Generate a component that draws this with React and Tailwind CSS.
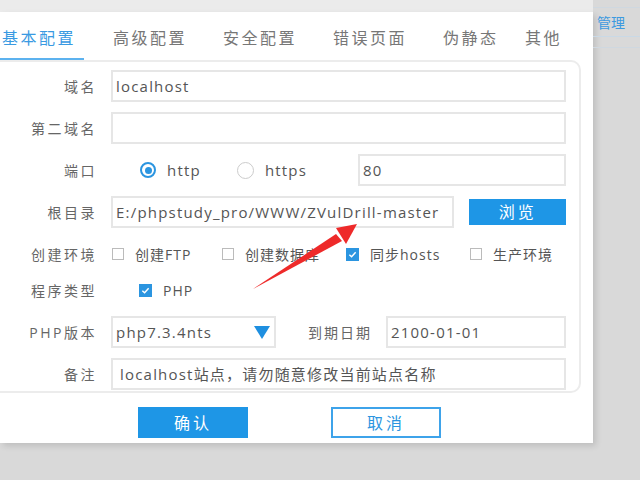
const font = { fontFamily: '"Open Sans", "Noto Sans CJK SC", sans-serif' };

const Label = ({ children }) => (
  <div className="w-[115px] shrink-0 text-right text-[14px] tracking-[2.5px] text-[#666]">{children}</div>
);

const Box = ({ checked }) =>
  checked ? (
    <span className="w-[13px] h-[13px] bg-[#2b95e0] flex items-center justify-center">
      <svg width="9" height="9" viewBox="0 0 10 10">
        <path d="M1.5 5.2 L4 7.5 L8.5 2.5" stroke="white" strokeWidth="1.6" fill="none" />
      </svg>
    </span>
  ) : (
    <span className="w-[12px] h-[12px] border border-[#bbb] bg-white" />
  );

const Field = ({ className, children }) => (
  <div className={"h-[32px] border-2 border-[#e6e6e6] flex items-center pl-[3px] text-[15px] tracking-[1.2px] text-[#555] " + className}>
    {children}
  </div>
);

export default function App() {
  return (
    <div className="w-[640px] h-[480px] bg-[#d9d9d9] relative overflow-hidden" style={font}>
      {/* background table on the right */}
      <div className="absolute left-[593px] top-0 w-[47px] h-[60px]">
        <div className="h-[8px] border-b border-[#cfd8e0]" />
        <div className="h-[29px] border-b border-[#c9d9e6] pl-[4px] pt-[4px] text-[14px] text-[#3d9ae0]">管理</div>
        <div className="h-[11px] border-b border-[#cfd8e0]" />
      </div>
      <div className="h-[12px] w-[593px] bg-[#ebebeb]" />
      <div className="w-[593px] h-[431px] bg-white shadow-[3px_3px_6px_rgba(0,0,0,0.12)] flex flex-col">
        {/* tabs */}
        <div className="h-[48px] flex items-start pt-[14px] text-[16px] tracking-[2.5px] text-[#777]">
          <div className="w-[84px] h-[34px] border-b-2 border-[#5cb2ef] text-[#3a9ae2] pl-[2px]">基本配置</div>
          <div className="ml-[29px] w-[110px]">高级配置</div>
          <div className="w-[110px]">安全配置</div>
          <div className="w-[110px]">错误页面</div>
          <div className="w-[82px]">伪静态</div>
          <div>其他</div>
        </div>
        {/* panel */}
        <div className="ml-[-20px] w-[601px] h-[333px] border-2 border-[#ececec] rounded-[10px] pr-[13px] flex flex-col pt-[8px]">
          <div className="flex items-center gap-[14px]">
            <Label>域名</Label>
            <Field className="flex-1">localhost</Field>
          </div>
          <div className="flex items-center gap-[14px] mt-[10px]">
            <Label>第二域名</Label>
            <Field className="flex-1" />
          </div>
          <div className="flex items-center mt-[10px]">
            <Label>端口</Label>
            <div className="ml-[43px] w-[16px] h-[16px] rounded-full border-2 border-[#2b95e0] flex items-center justify-center">
              <span className="w-[7px] h-[7px] rounded-full bg-[#2b95e0]" />
            </div>
            <span className="ml-[11px] text-[15px] tracking-[1.2px] text-[#555]">http</span>
            <div className="ml-[36px] w-[17px] h-[17px] rounded-full border border-[#ccc]" />
            <span className="ml-[11px] text-[15px] tracking-[1.2px] text-[#555]">https</span>
            <Field className="ml-auto w-[208px]">80</Field>
          </div>
          <div className="flex items-center gap-[14px] mt-[10px]">
            <Label>根目录</Label>
            <Field className="w-[345px]">E:/phpstudy_pro/WWW/ZVulDrill-master</Field>
            <div className="ml-[1px] w-[97px] h-[26px] bg-[#1e96e6] text-white text-[16px] tracking-[3px] flex items-center justify-center">浏览</div>
          </div>
          <div className="flex items-center h-[40px] mt-[6px] text-[14px] text-[#555] tracking-[1px]">
            <Label>创建环境</Label>
            <div className="ml-[15px] flex items-center gap-[11px] w-[110px]"><Box />创建FTP</div>
            <div className="flex items-center gap-[11px] w-[124px]"><Box />创建数据库</div>
            <div className="flex items-center gap-[11px] w-[124px]"><Box checked />同步hosts</div>
            <div className="flex items-center gap-[11px]"><Box />生产环境</div>
          </div>
          <div className="flex items-center h-[32px] text-[14px] text-[#555] tracking-[1px]">
            <Label>程序类型</Label>
            <div className="ml-[42px] flex items-center gap-[11px]"><Box checked />PHP</div>
          </div>
          <div className="flex items-center gap-[14px] mt-[10px]">
            <Label>PHP版本</Label>
            <Field className="w-[165px] pr-[4px]">
              php7.3.4nts
              <svg className="ml-auto" width="16" height="13" viewBox="0 0 16 13">
                <path d="M0 0 H16 L8 13 Z" fill="#1e8fe0" />
              </svg>
            </Field>
            <div className="ml-[18px] text-[14px] tracking-[2px] text-[#666]">到期日期</div>
            <Field className="flex-1">2100-01-01</Field>
          </div>
          <div className="flex items-center gap-[14px] mt-[10px]">
            <Label>备注</Label>
            <Field className="flex-1 pl-[7px]">localhost站点，请勿随意修改当前站点名称</Field>
          </div>
        </div>
        {/* footer buttons */}
        <div className="flex mt-[14px]">
          <div className="ml-[138px] w-[110px] h-[31px] bg-[#1e96e6] text-white text-[16px] tracking-[3px] flex items-center justify-center">确认</div>
          <div className="ml-[83px] w-[110px] h-[31px] border-2 border-[#3ea3ea] text-[#2b95e0] text-[16px] tracking-[3px] flex items-center justify-center">取消</div>
        </div>
      </div>
      {/* red annotation arrow */}
      <svg className="absolute left-0 top-0" width="640" height="480" viewBox="0 0 640 480">
        <path d="M357 224 L336 228 L346 244 Z" fill="#ee2a2a" />
        <path d="M253 289 L336 234 L342 241 Z" fill="#ee2a2a" />
      </svg>
    </div>
  );
}
